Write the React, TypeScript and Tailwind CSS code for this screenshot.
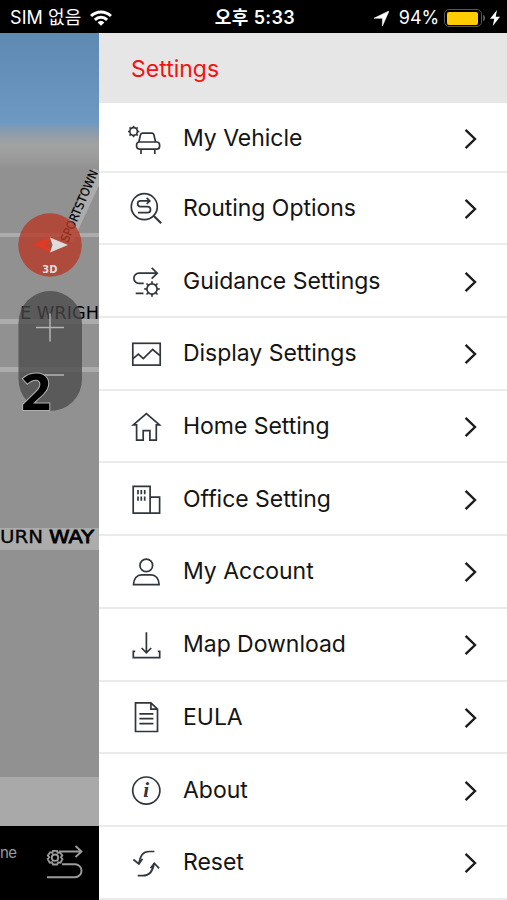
import type { ReactNode } from "react";

type MenuItem = { label: string; icon: ReactNode };

// 8 short teeth around a ring
function Gear({ cx, cy, r, tooth }: { cx: number; cy: number; r: number; tooth: number }) {
  return (
    <g>
      <circle cx={cx} cy={cy} r={r} />
      {[0, 45, 90, 135, 180, 225, 270, 315].map((a) => (
        <path key={a} d={`M${cx} ${cy - r}v${-tooth}`} transform={`rotate(${a} ${cx} ${cy})`} />
      ))}
    </g>
  );
}

const items: MenuItem[] = [
  {
    label: "My Vehicle",
    icon: (
      <>
        <Gear cx={5.6} cy={11.5} r={3.8} tooth={1.9} />
        <path d="M10.8 22l1.7-7.2q.5-1.7 2.1-1.7h9.2q1.6 0 2.1 1.7l1.7 7.2" />
        <rect x="8.6" y="22" width="23" height="7.2" rx="3" />
        <path d="M13 29.3v4.7M26.8 29.3v4.7" />
      </>
    ),
  },
  {
    label: "Routing Options",
    icon: (
      <>
        <circle cx="16.3" cy="16.7" r="13" />
        <path d="M25.6 25.8l7.6 7.4" strokeWidth="2.2" />
        <path d="M21.5 10.9h-9a2.9 2.9 0 0 0 0 5.8h7a3 3 0 0 1 0 6h-9.5M18.6 7.8l3.2 3.1-3.2 3.1" />
      </>
    ),
  },
  {
    label: "Guidance Settings",
    icon: (
      <>
        <path d="M29 10.2H11a5 5 0 0 0 0 10.2h4.7M23.7 4.8l5.5 5.4-5.5 5.4M7.7 30.3h7.8" />
        <Gear cx={24} cy={26} r={5.1} tooth={2.7} />
      </>
    ),
  },
  {
    label: "Display Settings",
    icon: (
      <>
        <rect x="4.8" y="8.3" width="27.4" height="21.8" />
        <path d="M5 23.7l5.4-4.5 4.9 4.5 9.4-9.2 7.3 6.2" />
      </>
    ),
  },
  {
    label: "Home Setting",
    icon: <path d="M8.6 16.8H5.3L18.4 5.6l13.1 11.2h-3.2v15.4h-6.4v-9.5h-6.7v9.5H8.6z" />,
  },
  {
    label: "Office Setting",
    icon: (
      <>
        <path d="M5.2 5.4h16.9v26.8H5.2zM22.1 16.1h9.5v16.1h-9.5" />
        <path d="M10 9v4.3M13.3 9v4.3M16.7 9v4.3M10 15.4v4.3M13.3 15.4v4.3M16.7 15.4v4.3" />
      </>
    ),
  },
  {
    label: "My Account",
    icon: (
      <>
        <circle cx="18.3" cy="12.4" r="6.3" />
        <path d="M5.5 31.6c0-6 3.6-9.8 8-9.8h9.6c4.5 0 8 3.8 8 9.8z" />
      </>
    ),
  },
  {
    label: "Map Download",
    icon: <path d="M18.4 6.2v20.6M13.6 22l4.8 4.9 4.8-4.9M7.2 25.4H5.3v6.3h26.4v-6.3h-1.9" />,
  },
  {
    label: "EULA",
    icon: (
      <>
        <path d="M7.5 3.8h15.4l6.6 6.4v22.3h-22zM22.9 3.8v6.4h6.6" />
        <path d="M11.4 14.8h14M11.4 19.7h14M11.4 24.6h14" />
      </>
    ),
  },
  {
    label: "About",
    icon: (
      <>
        <circle cx="18.3" cy="18.6" r="13.6" />
        <text
          x="18.1"
          y="25.4"
          textAnchor="middle"
          className="fill-[#30363b] stroke-none font-['Liberation_Serif',serif] text-[21px] font-bold italic"
        >
          i
        </text>
      </>
    ),
  },
  {
    label: "Reset",
    icon: (
      <>
        <path d="M26.4 7.5h-5.2q-9 0-10.2 12.4M5.4 15.5l5.5 4.5 3.6-5.2" />
        <path d="M9.7 31.7h5.2q9.2 0 11.2-12.2M22.5 24.2l3.8-5 4.8 5.2" />
      </>
    ),
  },
];

function StatusBar() {
  return (
    <header className="flex h-[33px] shrink-0 items-center bg-black pt-[3px] pr-[7px] pl-[10px] font-['Inter','Noto_Sans_CJK_KR',sans-serif] text-white">
      <div className="flex flex-1 items-center">
        <span className="text-[18px] leading-none tracking-[0.1px] whitespace-nowrap">SIM 없음</span>
        <svg className="ml-[9px] h-4 w-[22px]" viewBox="0 0 22 16" fill="none" stroke="#fff" strokeWidth="3">
          <path d="M1 6a14.2 14.2 0 0 1 20 0M4.9 9.8a8.8 8.8 0 0 1 12.2 0" />
          <path d="M7.6 12.4a5 5 0 0 1 6.8 0L11 15.8z" fill="#fff" stroke="none" />
        </svg>
      </div>
      <span className="text-[18px] leading-none font-semibold tracking-[0.4px] whitespace-nowrap">오후 5:33</span>
      <div className="flex flex-1 items-center justify-end">
        <svg className="h-[15px] w-[15px]" viewBox="0 0 15 15">
          <path d="M15 0L8.4 15V7.2H0z" fill="#fff" stroke="#fff" strokeWidth="0.6" strokeLinejoin="round" />
        </svg>
        <span className="ml-[10px] text-[18px] leading-none tracking-[-0.1px]">94%</span>
        <div className="ml-[5px] h-[18px] w-[38px] rounded-[5px] border-[1.5px] border-[#55555a] p-[1.5px]">
          <div className="h-full w-[31px] rounded-[2px] bg-[#ffcc02]" />
        </div>
        <div className="ml-px h-[6px] w-[2px] rounded-r bg-[#55555a]" />
        <svg className="ml-[5px] h-4 w-[10px]" viewBox="0 0 10 16">
          <path d="M7 0L0 8.8h4.2L2.8 16 10 6.8H5.7z" fill="#fff" />
        </svg>
      </div>
    </header>
  );
}

function MapCanvas() {
  return (
    <svg className="h-[793px] w-[99px] font-['DejaVu_Sans',sans-serif]" viewBox="0 33 99 793">
      <defs>
        <linearGradient id="sky" x1="0" y1="0" x2="0" y2="1">
          <stop offset="0" stopColor="#5d89b2" />
          <stop offset="0.65" stopColor="#6c98c2" />
          <stop offset="0.75" stopColor="#929da8" />
          <stop offset="0.82" stopColor="#a1a2a2" />
          <stop offset="0.9" stopColor="#9d9d9d" />
          <stop offset="1" stopColor="#919191" />
        </linearGradient>
      </defs>
      <rect y="33" width="99" height="793" fill="#919191" />
      <rect y="33" width="99" height="136" fill="url(#sky)" />
      <path d="M0 235h99" stroke="#acacac" strokeWidth="4" />
      <path d="M0 321.5h99M0 369.5h99" stroke="#acacac" strokeWidth="5" />
      <path d="M67 240L99 171" stroke="#acacac" strokeWidth="12" />
      <rect y="528" width="99" height="22" fill="#acacac" />
      <rect y="777" width="99" height="49" fill="#a9a9a9" />

      <text
        transform="translate(68 243) rotate(-67)"
        textLength="77"
        lengthAdjust="spacingAndGlyphs"
        className="text-[12px]"
        stroke="#000"
        strokeWidth="0.2"
      >
        SPORTSTOWN
      </text>
      <text x="20" y="319" textLength="79" lengthAdjust="spacingAndGlyphs" className="text-[17px]">
        E WRIGH
      </text>
      <text y="543" className="text-[18px]" stroke="#000" strokeWidth="0.3">
        <tspan x="0" textLength="43" lengthAdjust="spacingAndGlyphs">
          URN
        </tspan>{" "}
        <tspan x="49" textLength="45" lengthAdjust="spacingAndGlyphs" strokeWidth="0.8">
          WAY
        </tspan>
      </text>

      <circle cx="50" cy="245" r="31.7" fill="#b63724" fillOpacity="0.78" />
      <path d="M32 244.5l18-7.5v4a3.5 3.5 0 0 0 0 7v4z" fill="#e03a24" />
      <path d="M68 245l-18-7.5 2.5 7.5-2.5 7.5z" fill="#dcdcdc" />
      <text x="50" y="273" textAnchor="middle" fill="#dedede" className="text-[10px] font-bold">
        3D
      </text>

      <rect x="18.5" y="291" width="63.5" height="120" rx="31.7" fill="#484848" fillOpacity="0.76" />
      <path d="M36 327.5h28M50 313.5v28M36 375h28" stroke="#b4b4b4" strokeWidth="1.5" />
      <text
        x="21"
        y="409.5"
        textLength="30"
        lengthAdjust="spacingAndGlyphs"
        stroke="#b0b0b0"
        strokeWidth="2"
        paintOrder="stroke"
        className="font-['Open_Sans',sans-serif] text-[51px] font-bold"
      >
        2
      </text>
    </svg>
  );
}

function BottomBar() {
  return (
    <div className="flex flex-1 items-start bg-black font-['Inter',sans-serif] text-[#9c9c9c]">
      <span className="mt-[17px] w-[45px] text-[15px] leading-5 tracking-[-0.6px]">ne</span>
      <svg className="mt-[18px] h-9 w-[38px]" viewBox="0 0 38 36" fill="none" stroke="currentColor" strokeWidth="1.9">
        <path d="M14 7.5h22M30.5 2l6 5.5-6 5.5M17 20.2h13a6.5 6.5 0 0 1 0 13H2" />
        <g fill="#000" strokeWidth="1.8" transform="translate(0 1.3)">
          <path d="M8 5.6h4l.7 2 2.1-.6 2.5 3.2-1.4 1.8 1.6 1.8-2 3.6-2.3-.4-1.1 2.2H8l-.9-2.2-2.4.4-2-3.6L4.3 12l-1.5-1.8 2.3-3.3 2.3.7z" />
          <circle cx="10" cy="12.4" r="3.2" />
        </g>
      </svg>
    </div>
  );
}

function MenuRow({ label, icon }: MenuItem) {
  return (
    <li className="flex h-[72.7px] items-center border-b-2 border-[#ebebeb] pr-[30px] pl-[29px] first:h-[70px] first:pt-[3px]">
      <svg className="h-9 w-9 shrink-0" viewBox="0 0 36 36" fill="none" stroke="#30363b" strokeWidth="1.7">
        {icon}
      </svg>
      <span className="ml-[19px] flex-1 text-[23px] leading-8 tracking-[-0.03px] whitespace-nowrap">{label}</span>
      <svg className="mt-[2px] h-[22px] w-[13px]" viewBox="0 0 13 22" fill="none" stroke="#1c1c1c" strokeWidth="2.4">
        <path d="M1.6 1.8L11 11l-9.4 9.2" />
      </svg>
    </li>
  );
}

export default function App() {
  return (
    <div className="flex h-[900px] w-[507px] flex-col overflow-hidden bg-black">
      <StatusBar />
      <div className="flex min-h-0 flex-1">
        <aside className="flex w-[99px] shrink-0 flex-col overflow-hidden">
          <MapCanvas />
          <BottomBar />
        </aside>
        <main className="h-[866px] flex-1 bg-white font-['Inter',sans-serif] text-[#141414]">
          <h1 className="flex h-[69.7px] items-center bg-[#e6e6e6] pt-[2px] pl-[32px] text-[23px] text-[#f51111]">Settings</h1>
          <ul>
            {items.map((item) => (
              <MenuRow key={item.label} {...item} />
            ))}
          </ul>
        </main>
      </div>
    </div>
  );
}
